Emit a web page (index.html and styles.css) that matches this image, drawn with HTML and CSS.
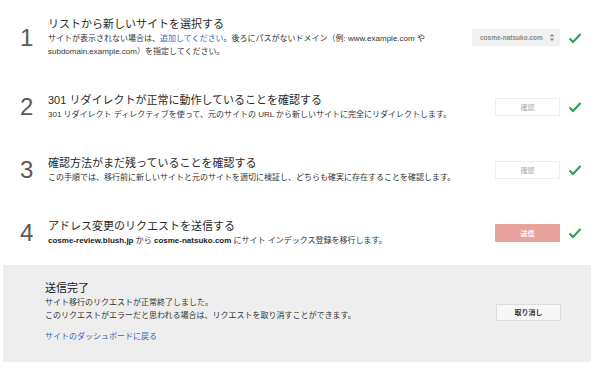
FILE: index.html
```html
<!DOCTYPE html>
<html lang="ja">
<head>
<meta charset="utf-8">
<link rel="stylesheet" href="styles.css">
</head>
<body>
<div class="page">
  <div class="step step-first">
    <div class="num">1</div>
    <div class="body">
      <div class="title">リストから新しいサイトを選択する</div>
      <div class="desc">サイトが表示されない場合は、<a class="link" href="#">追加してください</a>。後ろにパスがないドメイン（例: www.example.com や<br>subdomain.example.com）を指定してください。</div>
    </div>
    <div class="select"><span class="select-text">cosme-natsuko.com</span><span class="arrows"><svg width="6" height="9" viewBox="0 0 6 9"><path d="M0.6 3.6 L3 1 L5.4 3.6 Z M0.6 5.4 L3 8 L5.4 5.4 Z" fill="#888"/></svg></span></div>
    <svg class="check" width="14" height="14" viewBox="0 0 14 14"><path d="M1.5 7.5 L5 11 L12.5 3" fill="none" stroke="#2f9a58" stroke-width="2"/></svg>
  </div>
  <div class="step">
    <div class="num">2</div>
    <div class="body">
      <div class="title">301 リダイレクトが正常に動作していることを確認する</div>
      <div class="desc">301 リダイレクト ディレクティブを使って、元のサイトの URL から新しいサイトに完全にリダイレクトします。</div>
    </div>
    <div class="btn btn-light">確認</div>
    <svg class="check" width="14" height="14" viewBox="0 0 14 14"><path d="M1.5 7.5 L5 11 L12.5 3" fill="none" stroke="#2f9a58" stroke-width="2"/></svg>
  </div>
  <div class="step">
    <div class="num">3</div>
    <div class="body">
      <div class="title">確認方法がまだ残っていることを確認する</div>
      <div class="desc">この手順では、移行前に新しいサイトと元のサイトを適切に検証し、どちらも確実に存在することを確認します。</div>
    </div>
    <div class="btn btn-light">確認</div>
    <svg class="check" width="14" height="14" viewBox="0 0 14 14"><path d="M1.5 7.5 L5 11 L12.5 3" fill="none" stroke="#2f9a58" stroke-width="2"/></svg>
  </div>
  <div class="step">
    <div class="num">4</div>
    <div class="body">
      <div class="title">アドレス変更のリクエストを送信する</div>
      <div class="desc"><b>cosme-review.blush.jp</b> から <b>cosme-natsuko.com</b> にサイト インデックス登録を移行します。</div>
    </div>
    <div class="btn btn-red">送信</div>
    <svg class="check" width="14" height="14" viewBox="0 0 14 14"><path d="M1.5 7.5 L5 11 L12.5 3" fill="none" stroke="#2f9a58" stroke-width="2"/></svg>
  </div>
  <div class="panel">
    <div class="panel-body">
      <div class="panel-title">送信完了</div>
      <div class="desc">サイト移行のリクエストが正常終了しました。<br>このリクエストがエラーだと思われる場合は、リクエストを取り消すことができます。</div>
      <a class="link back" href="#">サイトのダッシュボードに戻る</a>
    </div>
    <div class="btn btn-cancel">取り消し</div>
  </div>
</div>
</body>
</html>
```

FILE: styles.css
```css
html, body {
  margin: 0;
  padding: 0;
  background: #ffffff;
}
body {
  font-family: "Liberation Sans", "Noto Sans CJK JP", sans-serif;
  color: #333;
}
.page {
  width: 588px;
  margin-left: 3px;
}
.step {
  display: flex;
  align-items: center;
  padding: 17px 9px 18px 17px;
}
.num {
  width: 28px;
  font-size: 24px;
  color: #5a5a5a;
  line-height: 28px;
}
.body {
  flex: 1;
}
.title {
  font-size: 11px;
  line-height: 15px;
  color: #2a2a2a;
}
.desc {
  font-size: 8px;
  line-height: 13px;
  color: #333;
}
.desc b {
  font-weight: bold;
  color: #222;
}
.link {
  color: #3a68c0;
  text-decoration: none;
}
.select {
  width: 88px;
  height: 17px;
  box-sizing: border-box;
  background: #f1f1f1;
  color: #8a8a8a;
  font-size: 6.5px;
  font-weight: bold;
  display: flex;
  align-items: center;
  justify-content: space-between;
  padding: 0 5px 0 8px;
  white-space: nowrap;
}
.arrows {
  display: flex;
  align-items: center;
}
.btn {
  width: 65px;
  height: 18px;
  box-sizing: border-box;
  font-size: 7px;
  display: flex;
  align-items: center;
  justify-content: center;
}
.btn-light {
  border: 1px solid #eeeeee;
  background: #fff;
  color: #aaa;
}
.btn-red {
  background: #e8a29c;
  color: #fff;
  font-weight: bold;
  border-radius: 1px;
}
.check {
  margin-left: 8px;
  flex: none;
}
.panel {
  background: #eeeeee;
  display: flex;
  align-items: center;
  padding: 16px 30px 19px 42px;
}
.panel-body {
  flex: 1;
}
.panel-title {
  font-size: 11px;
  line-height: 15px;
  color: #1a1a1a;
}
.back {
  display: block;
  margin-top: 8px;
  font-size: 8px;
  line-height: 13px;
}
.btn-cancel {
  height: 17px;
  background: #f7f7f7;
  border: 1px solid #dcdcdc;
  color: #333;
  font-weight: bold;
}
```
